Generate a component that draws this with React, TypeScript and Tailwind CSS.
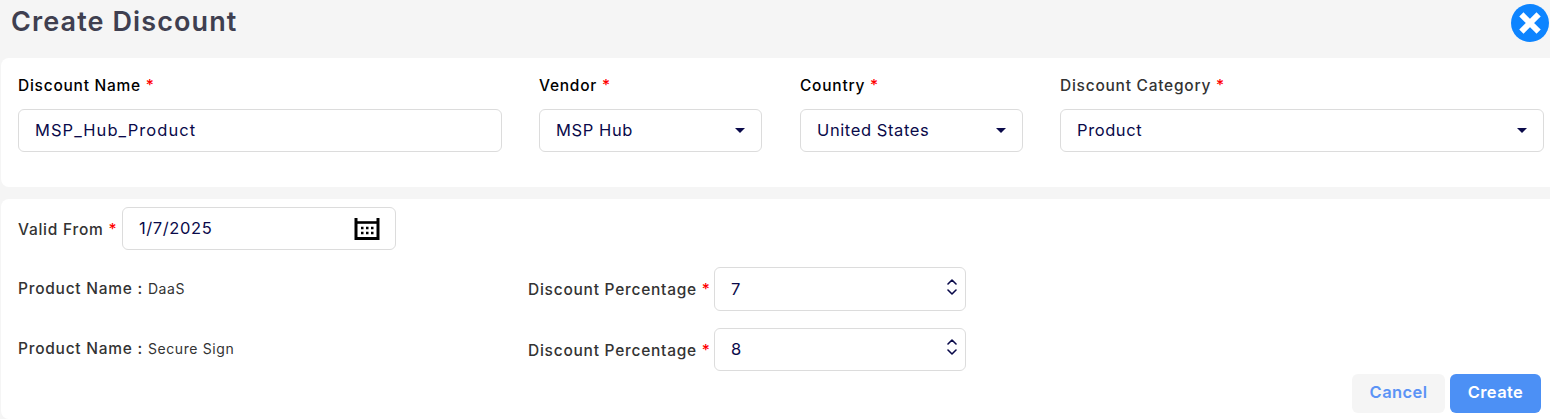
const FONT = "font-['Inter','Noto_Sans',sans-serif]";
const LABEL = 'text-[15.5px] font-medium tracking-[0.75px]';
const VALUE = 'text-[16.5px] tracking-[0.6px] text-[#0a0a4a]';

function Req() {
  return <span className="text-[#ff0000]">*</span>;
}

function Caret() {
  return (
    <svg width="10" height="5" viewBox="0 0 10 5" className="shrink-0">
      <path d="M0 0H10L5 5Z" fill="#0a0a4a" />
    </svg>
  );
}

function Field({ label, value, width, dark, select = true }: { label: string; value: string; width: string; dark?: boolean; select?: boolean }) {
  return (
    <div className={width}>
      <div className={`mb-[13px] h-[20px] leading-[20px] ${LABEL} ${dark ? 'text-black' : 'text-[#333]'}`}>
        {label} <Req />
      </div>
      <div className={`flex h-[43px] items-center justify-between rounded-md border border-[#dcdcdc] bg-white pl-[16px] pr-[16px] ${VALUE}`}>
        <span className={select ? '' : 'tracking-[1.05px]'}>{value}</span>
        {select && <Caret />}
      </div>
    </div>
  );
}

function NumberRow({ name, value, tall }: { name: string; value: string; tall?: boolean }) {
  return (
    <div className="flex items-center">
      <div className="mb-[2px] w-[510px] text-[#333]">
        <span className={LABEL}>Product Name : </span>
        <span className="text-[14px] tracking-[0.6px]">{name}</span>
      </div>
      <div className={`mt-[2px] w-[186px] whitespace-nowrap text-[#333] ${LABEL}`}>
        Discount Percentage <Req />
      </div>
      <div className={`flex w-[252px] items-center justify-between rounded-md border border-[#dcdcdc] bg-white pl-[16px] pr-[8px] ${tall ? 'h-[44px]' : 'h-[43px]'} ${VALUE}`}>
        <span>{value}</span>
        <svg width="10" height="16" viewBox="0 0 10 16" fill="none" stroke="#0a0a4a" strokeWidth="1.6" strokeLinecap="round" strokeLinejoin="round" className="mb-[5px]">
          <path d="M1 5L5 1L9 5" />
          <path d="M1 11L5 15L9 11" />
        </svg>
      </div>
    </div>
  );
}

export default function App() {
  return (
    <div className={`${FONT} h-[419px] w-[1550px] overflow-hidden bg-[#f5f5f5]`}>
      <div className="flex h-[58px] items-start justify-between pl-[11px] pr-[1px] pt-[2px]">
        <h1 className="text-[27px] font-semibold leading-[40px] tracking-[1.1px] text-[#3f3f50]">Create Discount</h1>
        <svg width="38" height="38" viewBox="0 0 38 38" className="mt-[2px]">
          <circle cx="19" cy="19" r="19" fill="#0d84ff" />
          <path d="M12.5 12.5L25.5 25.5M25.5 12.5L12.5 25.5" stroke="#fff" strokeWidth="6" strokeLinecap="square" />
        </svg>
      </div>

      <div className="ml-[1px] flex h-[129px] rounded-l-lg bg-white pl-[17px] pt-[18px]">
        <Field width="w-[484px]" label="Discount Name" value="MSP_Hub_Product" dark select={false} />
        <div className="w-[37px]" />
        <Field width="w-[223px]" label="Vendor" value="MSP Hub" dark />
        <div className="w-[38px]" />
        <Field width="w-[223px]" label="Country" value="United States" dark />
        <div className="w-[37px]" />
        <Field width="w-[484px]" label="Discount Category" value="Product" />
      </div>

      <div className="ml-[1px] mt-[12px] h-[220px] rounded-l-lg bg-white pl-[17px] pr-[9px] pt-[8px]">
        <div className="flex items-center">
          <div className={`mt-[2px] w-[104px] whitespace-nowrap text-[#333] ${LABEL}`}>
            Valid From <Req />
          </div>
          <div className={`flex h-[43px] w-[274px] items-center justify-between rounded-md border border-[#dcdcdc] bg-white pl-[16px] pr-[15px] ${VALUE}`}>
            <span>1/7/2025</span>
            <svg width="26" height="24" viewBox="0 0 26 24" fill="none">
              <path d="M2 1V21.5H24V1" stroke="#000" strokeWidth="3" />
              <path d="M2 5.5H24" stroke="#000" strokeWidth="2.6" />
              <path d="M7 11H9.5M12 11H14.5M17 11H19.5M7 16H9.5M12 16H14.5M17 16H19.5" stroke="#000" strokeWidth="2.6" />
            </svg>
          </div>
        </div>
        <div className="mt-[17px] flex flex-col gap-[17px]">
          <NumberRow name="DaaS" value="7" tall />
          <NumberRow name="Secure Sign" value="8" />
        </div>
        <div className="mt-[3px] flex justify-end gap-[5px]">
          <button className="h-[39px] w-[93px] rounded-md bg-[#f5f5f5] pb-[3px] text-[16.5px] font-semibold tracking-[0.4px] text-[#5b93f5]">Cancel</button>
          <button className="h-[39px] w-[91px] rounded-md bg-[#4c90f5] pb-[3px] text-[16.5px] font-semibold tracking-[0.4px] text-white">Create</button>
        </div>
      </div>
    </div>
  );
}
